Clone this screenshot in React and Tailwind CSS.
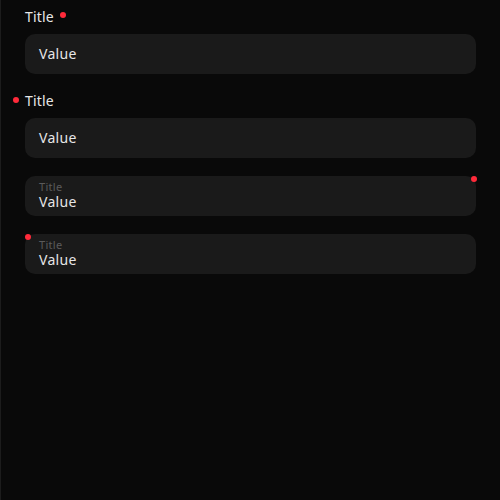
export default function App() {
  const font = { fontFamily: '"Noto Sans", "DejaVu Sans", sans-serif' };
  return (
    <div className="w-[500px] h-[500px] bg-[#090909] border-l border-[#1c1c1c] text-[#e6e6e6]" style={font}>
      <div className="pl-[24px] pr-[24px] pt-[8px] flex flex-col">
        <div className="flex items-center h-[18px] text-[14px] leading-[18px] tracking-[0.2px]">
          <span>Title</span>
          <span className="ml-[6px] w-[6px] h-[6px] rounded-full bg-[#ff2a3a] -mt-[4px]"></span>
        </div>
        <div className="mt-[8px] h-[40px] rounded-[10px] bg-[#1a1a1a] flex items-center px-[14px] pb-[2px] text-[14px] tracking-[0.3px]">
          Value
        </div>

        <div className="mt-[18px] relative flex items-center h-[18px] text-[14px] leading-[18px] tracking-[0.2px]">
          <span className="absolute -left-[12px] top-[5px] w-[6px] h-[6px] rounded-full bg-[#ff2a3a]"></span>
          <span>Title</span>
        </div>
        <div className="mt-[8px] h-[40px] rounded-[10px] bg-[#1a1a1a] flex items-center px-[14px] pb-[2px] text-[14px] tracking-[0.3px]">
          Value
        </div>

        <div className="mt-[18px] relative h-[40px] rounded-[10px] bg-[#1a1a1a] flex flex-col gap-[1px] px-[14px] pt-[5px]">
          <span className="absolute -right-[1px] top-[0px] w-[6px] h-[6px] rounded-full bg-[#ff2a3a]"></span>
          <span className="text-[11px] leading-[12px] text-[#5a5a5a] tracking-[0.3px]">Title</span>
          <span className="text-[14px] leading-[16px] tracking-[0.3px]">Value</span>
        </div>

        <div className="mt-[18px] relative h-[40px] rounded-[10px] bg-[#1a1a1a] flex flex-col gap-[1px] px-[14px] pt-[5px]">
          <span className="absolute left-[0px] top-[0px] w-[6px] h-[6px] rounded-full bg-[#ff2a3a]"></span>
          <span className="text-[11px] leading-[12px] text-[#5a5a5a] tracking-[0.3px]">Title</span>
          <span className="text-[14px] leading-[16px] tracking-[0.3px]">Value</span>
        </div>
      </div>
    </div>
  );
}
